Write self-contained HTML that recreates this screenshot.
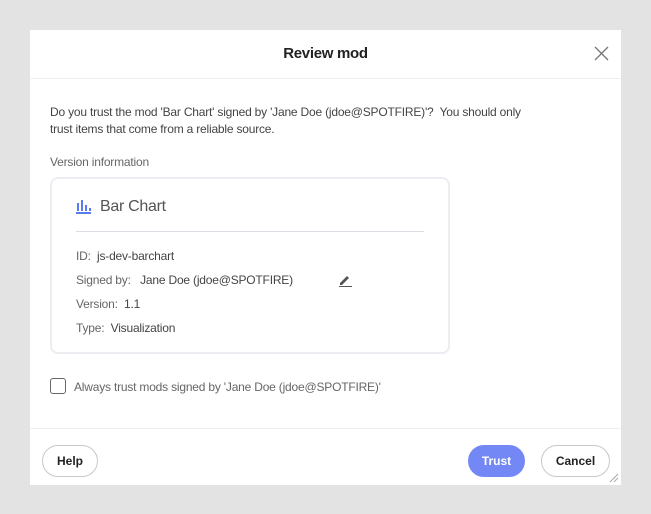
<!DOCTYPE html>
<html><head><meta charset="utf-8"><style>
*{box-sizing:border-box;margin:0;padding:0}
body{width:651px;height:514px;background:#e3e3e3;font-family:"Liberation Sans",sans-serif;position:relative;overflow:hidden;color:#333}
.dlg{position:absolute;left:30px;top:30px;width:591px;height:455px;background:#fff}
.a{position:absolute;white-space:nowrap}
.t{font-size:12px;color:#444;letter-spacing:-0.2px}
.g{color:#666}
.btn{position:absolute;top:415px;height:32px;border-radius:16px;border:1px solid #c8c8c8;background:#fff;font-size:12px;font-weight:bold;color:#222;text-align:center;line-height:30px}
</style></head><body>
<div class="dlg">
  <div class="a" style="left:0;width:591px;top:15px;text-align:center;font-size:15px;font-weight:bold;color:#222;letter-spacing:-0.3px">Review mod</div>
  <svg class="a" style="left:564px;top:16px" width="15" height="15" viewBox="0 0 15 15"><path d="M1 1L14 14M14 1L1 14" stroke="#777" stroke-width="1.3"/></svg>
  <div class="a" style="left:0;top:48px;width:591px;height:1px;background:#eeeef4"></div>
  <div class="a t" style="left:20px;top:75px">Do you trust the mod 'Bar Chart' signed by 'Jane Doe (jdoe@SPOTFIRE)'?&nbsp; You should only</div>
  <div class="a t" style="left:20px;top:92px">trust items that come from a reliable source.</div>
  <div class="a t g" style="left:20px;top:125px">Version information</div>
  <div class="a" style="left:20px;top:147px;width:400px;height:177px;border:2px solid #ececf3;border-radius:8px"></div>
  <svg class="a" style="left:46px;top:170px" width="15" height="14" viewBox="0 0 15 14"><g fill="#5b7cf0"><rect x="1" y="3" width="2" height="8"/><rect x="5" y="0" width="2" height="11"/><rect x="9" y="5" width="2" height="6"/><rect x="0" y="12" width="15" height="2"/><rect x="13" y="8" width="2" height="3"/></g></svg>
  <div class="a" style="left:70px;top:168px;font-size:16px;color:#555;letter-spacing:-0.3px">Bar Chart</div>
  <div class="a" style="left:46px;top:201px;width:348px;height:1px;background:#dcdce4"></div>
  <div class="a t" style="left:46px;top:219px"><span class="g">ID:</span>&nbsp; js-dev-barchart</div>
  <div class="a t" style="left:46px;top:243px"><span class="g">Signed by:</span>&nbsp;&nbsp; Jane Doe (jdoe@SPOTFIRE)</div>
  <svg class="a" style="left:309px;top:244px" width="13" height="13" viewBox="0 0 13 13"><path d="M1 9L8 2L10 4L3 11H1Z" fill="#555"/><rect x="0" y="12" width="13" height="1.2" fill="#555"/></svg>
  <div class="a t" style="left:46px;top:267px"><span class="g">Version:</span>&nbsp; 1.1</div>
  <div class="a t" style="left:46px;top:291px"><span class="g">Type:</span>&nbsp; Visualization</div>
  <div class="a" style="left:20px;top:348px;width:16px;height:16px;border:1.5px solid #666;border-radius:3px"></div>
  <div class="a t g" style="left:44px;top:350px">Always trust mods signed by 'Jane Doe (jdoe@SPOTFIRE)'</div>
  <div class="a" style="left:0;top:398px;width:591px;height:1px;background:#efeff3"></div>
  <div class="btn" style="left:12px;width:56px">Help</div>
  <div class="btn" style="left:438px;width:57px;background:#7388f5;border-color:#7388f5;color:#fff">Trust</div>
  <div class="btn" style="left:511px;width:69px">Cancel</div>
  <svg class="a" style="left:577px;top:441px" width="12" height="12" viewBox="0 0 12 12"><path d="M11 3L3 11M11 7L7 11" stroke="#aaa" stroke-width="1"/></svg>
</div>
</body></html>
